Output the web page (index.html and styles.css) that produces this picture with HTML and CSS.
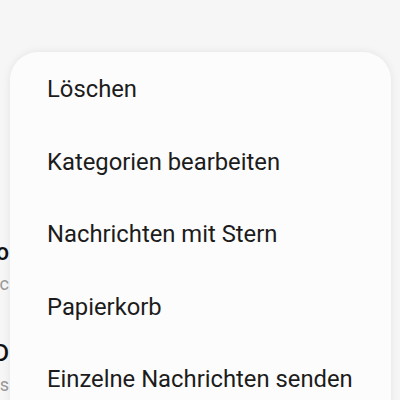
FILE: index.html
```html
<!DOCTYPE html>
<html lang="de">
<head>
  <meta charset="UTF-8" />
  <meta name="viewport" content="width=device-width, initial-scale=1.0" />
  <title>Menü</title>
  <link rel="stylesheet" href="styles.css">
</head>
<body>
  <div class="screen">
    <!-- list behind the menu, only its left edge peeks out -->
    <div class="mail-list">
      <div class="mail">
        <span class="mail-from">Info</span>
        <span class="mail-text">Abc</span>
      </div>
      <div class="mail">
        <span class="mail-from">ID</span>
        <span class="mail-text">Is</span>
      </div>
    </div>

    <div class="menu">
      <div class="menu-item">Löschen</div>
      <div class="menu-item">Kategorien bearbeiten</div>
      <div class="menu-item">Nachrichten mit Stern</div>
      <div class="menu-item">Papierkorb</div>
      <div class="menu-item">Einzelne Nachrichten senden</div>
    </div>
  </div>
</body>
</html>
```

FILE: styles.css
```css
* {
  box-sizing: border-box;
}

body {
  margin: 0;
  padding: 0;
  font-family: Roboto, 'Noto Sans', sans-serif;
  background: #f6f6f6;
}

.screen {
  position: relative;
  width: 400px;
  height: 400px;
  overflow: hidden;
}

.mail-list {
  padding-top: 239px;
  display: flex;
  flex-direction: column;
  gap: 43px;
}

.mail {
  width: 9px;
  display: flex;
  flex-direction: column;
  align-items: flex-end;
  gap: 4px;
  white-space: nowrap;
}

.mail-from {
  font-size: 23px;
  font-weight: 500;
  line-height: 28px;
  color: #111;
}

.mail-text {
  font-size: 18px;
  line-height: 26px;
  color: #999;
}

.menu {
  position: absolute;
  top: 52px;
  left: 10px;
  width: 381px;
  height: 380px;
  background: #fcfcfc;
  border-radius: 28px;
  box-shadow: 0 0 8px rgba(0, 0, 0, 0.08);
  padding-top: 1px;
}

.menu-item {
  height: 72.5px;
  display: flex;
  align-items: center;
  padding-left: 37px;
  font-size: 23.8px;
  color: #1c1c1c;
}
```
